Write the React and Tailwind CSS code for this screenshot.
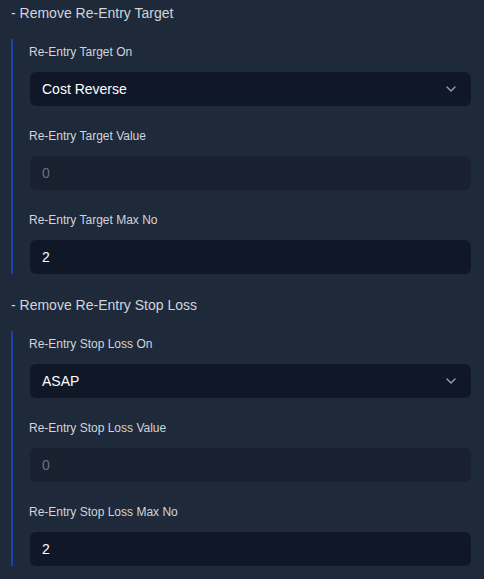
import React from "react";
import { ChevronDown } from "lucide-react";

function Field({ label, value, kind }) {
  return (
    <div className="flex flex-col">
      <label className="text-xs leading-4 font-medium text-gray-300 mb-3 -ml-px">{label}</label>
      {kind === "select" ? (
        <div className="h-[34px] rounded-md bg-gray-900 flex items-center justify-between pl-3 pr-3 text-sm text-white">
          <span>{value}</span>
          <ChevronDown className="w-4 h-4 text-gray-400" strokeWidth={2} />
        </div>
      ) : kind === "disabled" ? (
        <div className="h-[34px] rounded-md bg-[#192130] flex items-center pl-3 text-sm text-gray-500">
          {value}
        </div>
      ) : (
        <div className="h-[34px] rounded-md bg-gray-900 flex items-center pl-3 text-sm text-white">
          {value}
        </div>
      )}
    </div>
  );
}

function Section({ title, fields }) {
  return (
    <div>
      <h3 className="text-sm leading-5 text-gray-300 mb-4">{title}</h3>
      <div className="border-l-2 border-[#1e40af] pl-[17px] pt-[5px] flex flex-col gap-[22px]">
        {fields.map((f) => (
          <Field key={f.label} {...f} />
        ))}
      </div>
    </div>
  );
}

export default function App() {
  return (
    <div
      className="min-h-screen bg-gray-800 pl-[11px] pr-[13px] pt-[3px] flex flex-col gap-[21px]"
      style={{ fontFamily: '"Liberation Sans", Arial, sans-serif' }}
    >
      <Section
        title="- Remove Re-Entry Target"
        fields={[
          { label: "Re-Entry Target On", value: "Cost Reverse", kind: "select" },
          { label: "Re-Entry Target Value", value: "0", kind: "disabled" },
          { label: "Re-Entry Target Max No", value: "2", kind: "input" },
        ]}
      />
      <Section
        title="- Remove Re-Entry Stop Loss"
        fields={[
          { label: "Re-Entry Stop Loss On", value: "ASAP", kind: "select" },
          { label: "Re-Entry Stop Loss Value", value: "0", kind: "disabled" },
          { label: "Re-Entry Stop Loss Max No", value: "2", kind: "input" },
        ]}
      />
    </div>
  );
}
